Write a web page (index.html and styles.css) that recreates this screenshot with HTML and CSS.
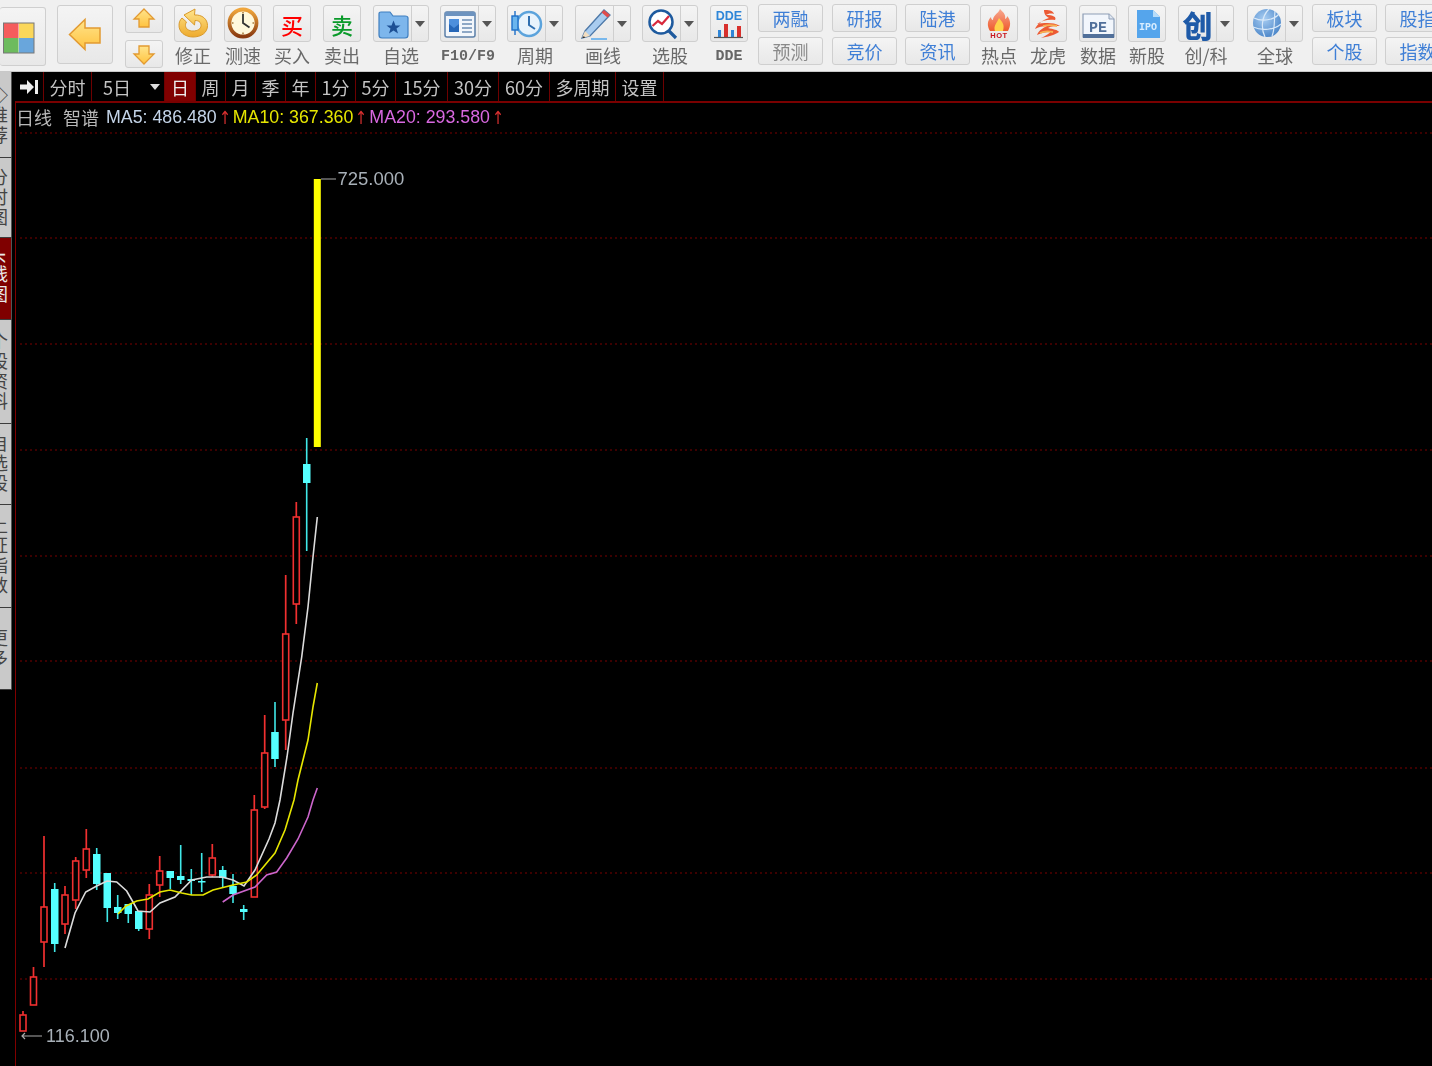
FILE: index.html
```html
<!DOCTYPE html>
<html lang="zh">
<head>
<meta charset="utf-8">
<title>智谱 日线</title>
<link rel="stylesheet" href="styles.css">
</head>
<body>
<header class="toolbar">
  <div class="btn logo"><svg class="ic" width="46" height="59" viewBox="0 0 46 59"><rect x="3.5" y="16" width="15" height="15" fill="#f55c5c"/><rect x="19" y="16" width="15" height="15" fill="#fbd75a"/><rect x="3.5" y="31" width="15" height="15" fill="#6dbb5e"/><rect x="19" y="31" width="15" height="15" fill="#69a6dc"/><rect x="3.5" y="16" width="30.5" height="30" fill="none" stroke="#777"/></svg></div>
  <div class="btn back"><svg class="ic" width="56" height="59" viewBox="0 0 56 59"><defs><linearGradient id="gy" x1="0" y1="0" x2="0" y2="1"><stop offset="0" stop-color="#ffe48c"/><stop offset="1" stop-color="#ffc340"/></linearGradient></defs><path d="M12.500 29.500L28 14.500V23H43V38H28V44.500Z" fill="url(#gy)" stroke="#e29a32" stroke-width="1.500"/></svg></div>
  <div class="updown">
    <div class="btn mini"><svg class="ic" width="38" height="28" viewBox="0 0 38 28"><path d="M19 4L29 14H24V22H14V14H9Z" fill="url(#gy)" stroke="#e29a32" stroke-width="1.300"/></svg></div>
    <div class="btn mini"><svg class="ic" width="38" height="28" viewBox="0 0 38 28"><path d="M19 24L29 14H24V6H14V14H9Z" fill="url(#gy)" stroke="#e29a32" stroke-width="1.300"/></svg></div>
  </div>
  <div class="tool"><div class="btn square"><svg class="ic" width="38" height="37" viewBox="0 0 38 37"><defs><linearGradient id="gr" x1="0" y1="0" x2="0" y2="1"><stop offset="0" stop-color="#ffe58c"/><stop offset="1" stop-color="#eeaa2c"/></linearGradient></defs><path d="M10 10L21 4L20.500 10C28 9.500 33.500 14 33.500 20.500C33.500 28 27 32 19 32C11 32 5 27 5 20.500C5 17 6 15 8 13L12.500 17C11.500 18.500 11.500 19.500 11.500 20.500C11.500 24 15 26 19 26C23.500 26 27 24 27 20.500C27 17 24.500 15.500 21 15.500L20.500 20Z" fill="url(#gr)" stroke="#d99a2c" stroke-width="1"/></svg></div><span class="label">修正</span></div>
  <div class="tool"><div class="btn square"><svg class="ic" width="38" height="37" viewBox="0 0 38 37"><defs><linearGradient id="gc" x1="0" y1="0" x2="0" y2="1"><stop offset="0" stop-color="#f0a63c"/><stop offset="1" stop-color="#8a3a10"/></linearGradient></defs><circle cx="19" cy="18" r="13.500" fill="#fff8dc" stroke="url(#gc)" stroke-width="3.800"/><path d="M19 9V18L25.500 22.500" fill="none" stroke="#333" stroke-width="1.800"/><path d="M19 7V8.500M19 27.500V29M8 18H9.500M28.500 18H30" stroke="#a87a3c" stroke-width="1.500"/></svg></div><span class="label">测速</span></div>
  <div class="tool"><div class="btn square glyph buy">买</div><span class="label">买入</span></div>
  <div class="tool"><div class="btn square glyph sell">卖</div><span class="label">卖出</span></div>
  <div class="tool"><div class="btn split"><div class="split-main"><svg class="ic" width="38" height="37" viewBox="0 0 38 37"><path d="M5 9V30Q5 33 8 33H31Q34 33 34 30V13Q34 11 31 11H19L16 7H7Q5 7 5 9Z" fill="#7db6ec" stroke="#3f7fc0" stroke-width="1.200"/><path d="M19.500 15.500L21.500 20.500H26.500L22.500 23.500L24 28.500L19.500 25.500L15 28.500L16.500 23.500L12.500 20.500H17.500Z" fill="#1d4f94"/></svg></div><i class="caret"></i></div><span class="label">自选</span></div>
  <div class="tool"><div class="btn split"><div class="split-main"><svg class="ic" width="38" height="37" viewBox="0 0 38 37"><rect x="4" y="7" width="30" height="25" rx="2" fill="#f2f6fb" stroke="#5b7fa8" stroke-width="1.500"/><rect x="4" y="7" width="30" height="4" fill="#6d93bf"/><rect x="8" y="14" width="10" height="13" fill="#4d8fdc"/><path d="M8 19L13 23L18 19V27H8Z" fill="#2667b8"/><path d="M21 15H31M21 19H31M21 23H31M21 27H31" stroke="#6d8fb5" stroke-width="1.400"/></svg></div><i class="caret"></i></div><span class="label mono">F10/F9</span></div>
  <div class="tool"><div class="btn split"><div class="split-main"><svg class="ic" width="38" height="37" viewBox="0 0 38 37"><circle cx="21" cy="19" r="12" fill="#e8f3fc" stroke="#5ba3dc" stroke-width="2.500"/><path d="M21 11V20L27 24" fill="none" stroke="#2f6fb0" stroke-width="2"/><path d="M7 6V30" stroke="#1e6fc8" stroke-width="1.400"/><rect x="4" y="11" width="6" height="14" fill="#6ab5ee" stroke="#1e6fc8" stroke-width="1.400"/></svg></div><i class="caret"></i></div><span class="label">周期</span></div>
  <div class="tool"><div class="btn split"><div class="split-main"><svg class="ic" width="38" height="37" viewBox="0 0 38 37"><path d="M9 26L28 5L34 10L14 31L6 33Z" fill="#a9ccef" stroke="#4d78a8" stroke-width="1.300"/><path d="M28 5L34 10L31.500 12.500L25.500 7.500Z" fill="#e04c4c"/><path d="M6 33L9 26L14 31Z" fill="#f2ddc0"/><path d="M6 33L8 31L9 33Z" fill="#333"/><path d="M15 34H31" stroke="#6db3ec" stroke-width="1.800"/></svg></div><i class="caret"></i></div><span class="label">画线</span></div>
  <div class="tool"><div class="btn split"><div class="split-main"><svg class="ic" width="38" height="37" viewBox="0 0 38 37"><circle cx="18" cy="17" r="11.500" fill="#fff" stroke="#1e5a9e" stroke-width="2.500"/><path d="M26 26L33 33" stroke="#1e5a9e" stroke-width="3.200"/><path d="M9.500 21L15 16L19 19L26 11" fill="none" stroke="#d8283c" stroke-width="2.200"/></svg></div><i class="caret"></i></div><span class="label">选股</span></div>
  <div class="tool"><div class="btn square"><svg class="ic" width="38" height="37" viewBox="0 0 38 37"><text x="19" y="15" class="dde-text">DDE</text><path d="M14 32V19H18V32ZM27 32V21H31V32Z" fill="#d8302c"/><path d="M8 32V25H11V32ZM21 32V25H24V32Z" fill="#2f86d8"/><path d="M4 32.500H33" stroke="#555" stroke-width="1.200"/></svg></div><span class="label mono">DDE</span></div>
  <div class="pair"><div class="btn tall">两融</div><div class="btn tall muted">预测</div></div>
  <div class="pair"><div class="btn tall">研报</div><div class="btn tall">竞价</div></div>
  <div class="pair"><div class="btn tall">陆港</div><div class="btn tall">资讯</div></div>
  <div class="tool"><div class="btn square"><svg class="ic" width="38" height="37" viewBox="0 0 38 37"><defs><linearGradient id="gf" x1="0" y1="0" x2="0" y2="1"><stop offset="0" stop-color="#f8a890"/><stop offset="1" stop-color="#ee5a2c"/></linearGradient></defs><path d="M20 4C24 8 26 10 25 14C27 13 27 12 27 11C31 15 31 21 28 26H10C7 21 7 16 11 12C11 14 12 15 13 15C13 10 18 9 20 4Z" fill="url(#gf)"/><path d="M19 13C22 17 25 19 23 26H15C13 21 17 18 19 13Z" fill="#ffd24a"/><text x="19" y="33" class="hot-text">HOT</text></svg></div><span class="label">热点</span></div>
  <div class="tool"><div class="btn square"><svg class="ic" width="38" height="37" viewBox="0 0 38 37"><path d="M15 5C19 5 24 5 25 9C21 8 19 9 17 10C24 10 28 12 26 15C21 14 13 15 8 19C15 18 24 17 31 21C27 21 22 21 19 23C24 24 29 25 30 27C26 30 18 32 12 33C18 30 21 28 21 27C16 27 12 28 8 30C10 25 14 23 18 21C14 21 9 22 6 24C8 19 14 15 20 13C18 12 15 10 15 5Z" fill="#ec5a34"/><path d="M11 28C15 26 19 26 24 27M14 21C18 20 23 20 28 21" fill="none" stroke="#f8b050" stroke-width="1.800"/></svg></div><span class="label">龙虎</span></div>
  <div class="tool"><div class="btn square"><svg class="ic" width="38" height="37" viewBox="0 0 38 37"><path d="M4 9H30L35 14V32H4Z" fill="#f2f6fc" stroke="#8d9db5" stroke-width="1.200"/><path d="M4 29H35V33H4Z" fill="#506f9a"/><path d="M30 9V14H35" fill="#dfe6f0" stroke="#8d9db5"/><text x="19" y="27" class="pe-text">PE</text></svg></div><span class="label">数据</span></div>
  <div class="tool"><div class="btn square"><svg class="ic" width="38" height="37" viewBox="0 0 38 37"><path d="M9 5H25L32 12V33H9Z" fill="#55a5ec"/><path d="M25 5L32 12H25Z" fill="#b6dcfa"/><text x="20" y="25" class="ipo-text">IPO</text></svg></div><span class="label">新股</span></div>
  <div class="tool"><div class="btn split"><div class="split-main glyph chuang">创</div><i class="caret"></i></div><span class="label">创/科</span></div>
  <div class="tool"><div class="btn split"><div class="split-main"><svg class="ic" width="38" height="37" viewBox="0 0 38 37"><defs><radialGradient id="gb" cx=".4" cy=".35" r=".7"><stop offset="0" stop-color="#a8cdf2"/><stop offset="1" stop-color="#4a85c8"/></radialGradient></defs><circle cx="19" cy="18" r="14" fill="url(#gb)"/><path d="M6 13C14 17 26 15 31 9M5 22C14 26 26 25 33 19M21 4C13 12 13 24 17 32M27 6C26 16 27 25 24 31" fill="none" stroke="#d9e9f9" stroke-width="1.200"/></svg></div><i class="caret"></i></div><span class="label">全球</span></div>
  <div class="pair"><div class="btn tall">板块</div><div class="btn tall">个股</div></div>
  <div class="pair"><div class="btn tall">股指</div><div class="btn tall">指数</div></div>
</header>

<main class="workspace">
  <nav class="side">
    <div class="side-tab top"><span>◇推荐</span></div>
    <div class="side-tab"><span>分时图</span></div>
    <div class="side-tab active"><span>K线图</span></div>
    <div class="side-tab"><span>个股资料</span></div>
    <div class="side-tab"><span>自选股</span></div>
    <div class="side-tab"><span>上证指数</span></div>
    <div class="side-tab"><span>更多</span></div>
  </nav>
  <section class="content">
    <div class="periods">
      <div class="period"><svg width="18" height="16" viewBox="0 0 18 16"><path d="M0 5.500H7V1L14 8L7 15V10.500H0Z" fill="#eee"/><rect x="15" y="1" width="3" height="14" fill="#eee"/></svg></div>
      <div class="period">分时</div>
      <div class="period five">5日<i class="caret light"></i></div>
      <div class="period on">日</div>
      <div class="period">周</div>
      <div class="period">月</div>
      <div class="period">季</div>
      <div class="period">年</div>
      <div class="period">1分</div>
      <div class="period">5分</div>
      <div class="period">15分</div>
      <div class="period">30分</div>
      <div class="period">60分</div>
      <div class="period">多周期</div>
      <div class="period">设置</div>
    </div>
    <div class="chart">
      <div class="legend">
        <span class="name">日线</span><span class="name">智谱</span>
        <span class="ma ma5">MA5: 486.480<b>↑</b></span>
        <span class="ma ma10">MA10: 367.360<b>↑</b></span>
        <span class="ma ma20">MA20: 293.580<b>↑</b></span>
      </div>
      <svg class="plot" width="1416" height="964" viewBox="16 102 1416 964">
        <path class="grid" d="M20 133H1432M20 238H1432M20 344H1432M20 450H1432M20 556H1432M20 661H1432M20 768H1432M20 873H1432M20 979H1432"/>
        <g class="wick-r">
          <path d="M23 1011V1015M33.500 967V977M44 836V907M44 942V967M65 886V895M65 924V934M75.700 857V861M75.700 900V909M86.300 829V849M86.300 870V878M149.300 884V895M149.300 929V939M159.700 856V871M159.700 885V897M212.300 844V858M212.300 875V877M254.300 795V810M264.700 715V753M264.700 807V809M285.700 575V634M285.700 720V750M296.300 502V517M296.300 604V624"/>
        </g>
        <g class="body-r">
          <rect x="20" y="1015" width="6" height="16"/><rect x="30.500" y="977" width="6" height="28"/><rect x="41" y="907" width="6" height="35"/><rect x="62" y="895" width="6" height="29"/><rect x="72.700" y="861" width="6" height="39"/><rect x="83.300" y="849" width="6" height="21"/><rect x="146.300" y="895" width="6" height="34"/><rect x="156.700" y="871" width="6" height="14"/><rect x="209.300" y="858" width="6" height="17"/><rect x="251.300" y="810" width="6" height="87"/><rect x="261.700" y="753" width="6" height="54"/><rect x="282.700" y="634" width="6" height="86"/><rect x="293.300" y="517" width="6" height="87"/>
        </g>
        <g class="wick-c">
          <path d="M54.700 883V952M96.700 848V890M107.300 873V922M117.700 895V919M128.300 904V923M138.700 911V931M170.300 871V889M180.700 845V884M191.300 869V895M201.700 853V892M222.700 866V887M233 874V903M243.700 905V920M275 702V767M306.700 438V551"/>
        </g>
        <g class="body-c">
          <rect x="51" y="889" width="7.500" height="55"/><rect x="93" y="854" width="7.500" height="30"/><rect x="103.500" y="873" width="7.500" height="35"/><rect x="114" y="907" width="7.500" height="6"/><rect x="124.500" y="904" width="7.500" height="10"/><rect x="135" y="911" width="7.500" height="18"/><rect x="166.500" y="871" width="7.500" height="7"/><rect x="177" y="876" width="7.500" height="4"/><rect x="187.500" y="879" width="7.500" height="2"/><rect x="198" y="881" width="7.500" height="1.500"/><rect x="219" y="870" width="7.500" height="8"/><rect x="229.300" y="886" width="7.500" height="8"/><rect x="240" y="909" width="7.500" height="3"/><rect x="271.200" y="732" width="7.500" height="27"/><rect x="303" y="464" width="7.500" height="19"/>
        </g>
        <rect class="limit" x="313.800" y="179" width="7" height="268"/>
        <polyline class="ma-line w" points="65,948 75,913 85.700,892 96.700,886 107,881 116.700,882 126.700,891 133,902 138,911 150,912 160,903 175,897 191.700,880 206.700,877 221.700,877 233,880 244,886 255,870 269,839 275,823 280,800 287,757 293,713 301.700,657 308,607 313,557 317.300,517"/>
        <polyline class="ma-line y" points="118,914 126,906 136.700,901 148,899 160,892 170,890 181.700,893 191.700,895 203,895 213,890 233,885 246.700,882 256.700,875 275,853 285,830 294,800 298,780 308,740 313,707 317.300,683"/>
        <polyline class="ma-line v" points="222.700,902 233,895 255,887 266.700,875 276.700,872 286.700,858 298,839 308,817 313,800 317.300,788"/>
        <path class="leader" d="M321 179H336M22 1036H42M25 1033L22 1036L25 1039"/>
        <text class="price" x="337.500" y="185">725.000</text>
        <text class="price small" x="46" y="1042">116.100</text>
      </svg>
    </div>
  </section>
</main>
</body>
</html>
```
FILE: styles.css
```css
* { box-sizing: border-box; }
html, body { margin: 0; height: 100%; }
body {
  width: 1432px;
  height: 1066px;
  overflow: hidden;
  background: #000;
  font-family: "Noto Sans CJK SC", "Liberation Sans", sans-serif;
  display: flex;
  flex-direction: column;
}
.toolbar {
  height: 72px;
  flex: none;
  background: #f0f0f0;
  border-bottom: 1px solid #c8c8c8;
  padding-top: 5px;
  display: grid;
  grid-template-columns: 57px 68px 49px 50px 49px 50px 50px 67px 67px 68px 67px 68px 48px 74px 73px 75px 49px 50px 49px 50px 69px 65px 73px 80px;
  align-items: start;
  overflow: hidden;
  filter: blur(0.4px);
}
.btn {
  background: linear-gradient(#f4f4f4, #e8e8e8);
  border: 1.500px solid #cfcfcf;
  border-radius: 3px;
  display: flex;
  align-items: center;
  justify-content: center;
}
.ic { display: block; flex: none; }
.logo { width: 46px; height: 59px; margin-top: 2px; border-left: 0; }
.back { width: 56px; height: 59px; }
.updown { display: flex; flex-direction: column; gap: 7px; }
.mini { width: 38px; height: 28px; }
.tool { display: flex; flex-direction: column; align-items: flex-start; }
.square { width: 38px; height: 37px; }
.split { width: 56px; height: 37px; justify-content: flex-start; }
.split-main {
  width: 38px;
  height: 100%;
  border-right: 1.500px solid #cfcfcf;
  display: flex;
  align-items: center;
  justify-content: center;
  flex: none;
  overflow: hidden;
}
.caret {
  display: block;
  width: 0;
  height: 0;
  margin-left: 3px;
  border-left: 5.500px solid transparent;
  border-right: 5.500px solid transparent;
  border-top: 6px solid #555;
}
.label {
  width: 38px;
  margin-top: 3px;
  height: 20px;
  line-height: 20px;
  font-size: 18px;
  color: #6a6a6a;
  white-space: nowrap;
  display: flex;
  justify-content: center;
}
.tool:has(.split) .label { width: 56px; }
.label.mono { font-family: "Liberation Mono", monospace; font-size: 15px; font-weight: 700; color: #666; margin-top: 6px; height: 17px; line-height: 17px; }
.glyph { font-size: 22px; font-weight: 500; line-height: 1; }
.buy { color: #f00; }
.sell { color: #0a9a2a; }
.chuang { color: #1e5aa8; font-size: 30px; font-weight: 900; }
.pair { display: flex; flex-direction: column; gap: 5px; margin-top: -1px; }
.tall {
  width: 65px;
  height: 28px;
  font-size: 18px;
  line-height: 1;
  color: #3f7fd6;
}
.muted { color: #8a8a8a; }
.dde-text { font: 700 12.500px "Liberation Sans", sans-serif; fill: #2f86d8; text-anchor: middle; }
.hot-text { font: 900 7.500px "Liberation Sans", sans-serif; fill: #c8141c; text-anchor: middle; letter-spacing: 0.5px; }
.pe-text { font: 700 15px "Liberation Mono", monospace; fill: #506f9a; text-anchor: middle; }
.ipo-text { font: 700 10px "Liberation Mono", monospace; fill: #d8edff; text-anchor: middle; }

.workspace { flex: 1; min-height: 0; display: flex; filter: blur(0.35px); }
.side {
  width: 15px;
  flex: none;
  padding-right: 3px;
  display: grid;
  grid-template-rows: 86px 80px 82px 104px 81px 103px 82px;
  align-content: start;
}
.side-tab {
  background: #c9c9c9;
  border-bottom: 1px solid #3c3c3c;
  border-right: 1px solid #555;
  overflow: hidden;
  display: flex;
  align-items: center;
}
.side-tab span {
  writing-mode: vertical-rl;
  font-size: 18px;
  line-height: 18px;
  letter-spacing: 2px;
  color: #444;
  margin-left: -10px;
  flex: none;
}
.side-tab.top { align-items: flex-start; padding-top: 14px; }
.side-tab.active { background: #7f0000; }
.side-tab.active span { color: #e8e8e8; }

.content { flex: 1; min-width: 0; display: flex; flex-direction: column; }
.periods {
  height: 30px;
  flex: none;
  display: grid;
  grid-template-columns: 29px 48px 73px 31px 30px 30px 30px 30px 40px 40px 52px 51px 51px 66px 48px;
  justify-content: start;
  position: relative;
}
.periods::after {
  content: "";
  position: absolute;
  left: 0;
  right: 0;
  bottom: -1px;
  height: 2px;
  background: #7a0000;
}
.period {
  border-right: 1px solid #6e0000;
  color: #c4c4c4;
  font-size: 18px;
  line-height: 29px;
  display: flex;
  align-items: center;
  justify-content: center;
  position: relative;
}
.period.on { background: #800000; color: #eee; }
.period.five { justify-content: flex-start; padding-left: 11px; }
.caret.light { border-top-color: #ddd; position: absolute; right: 4px; top: 12px; }

.chart { flex: 1; min-height: 0; border-left: 1.500px solid #800000; position: relative; overflow: hidden; }
.plot { display: block; }
.legend {
  position: absolute;
  left: 0;
  top: 3px;
  height: 24px;
  display: flex;
  align-items: center;
  white-space: nowrap;
  color: #b8b8b8;
  font-size: 18px;
}
.name { margin-right: 11px; }
.name + .name { margin-right: 7px; }
.ma { font-family: "Liberation Sans", sans-serif; font-size: 17.800px; margin-right: 6px; display: flex; align-items: center; }
.ma b { font-weight: 400; color: #d83030; font-size: 18px; width: 9px; overflow: visible; font-family: "DejaVu Sans", sans-serif; margin-left: 1px; transform: scaleX(0.8); }
.ma5 { color: #c4d4e8; }
.ma10 { color: #e6e600; }
.ma20 { color: #d868e0; }

.grid { fill: none; stroke: #7a0000; stroke-width: 1; stroke-dasharray: 2 3; }
.wick-r path { fill: none; stroke: #f03030; stroke-width: 1.700; }
.body-r rect { fill: #000; stroke: #f03030; stroke-width: 1.600; }
.wick-c path { fill: none; stroke: #40e8e8; stroke-width: 1.600; }
.body-c rect { fill: #55ffff; }
.limit { fill: #ffff00; }
.ma-line { fill: none; stroke-width: 1.600; }
.ma-line.w { stroke: #dcdcdc; }
.ma-line.y { stroke: #e6e600; }
.ma-line.v { stroke: #cc66cc; }
.leader { fill: none; stroke: #aaa; stroke-width: 1.200; }
.price { font: 18.500px "Liberation Sans", sans-serif; fill: #a8b0b8; }
.price.small { font-size: 18px; }
```
